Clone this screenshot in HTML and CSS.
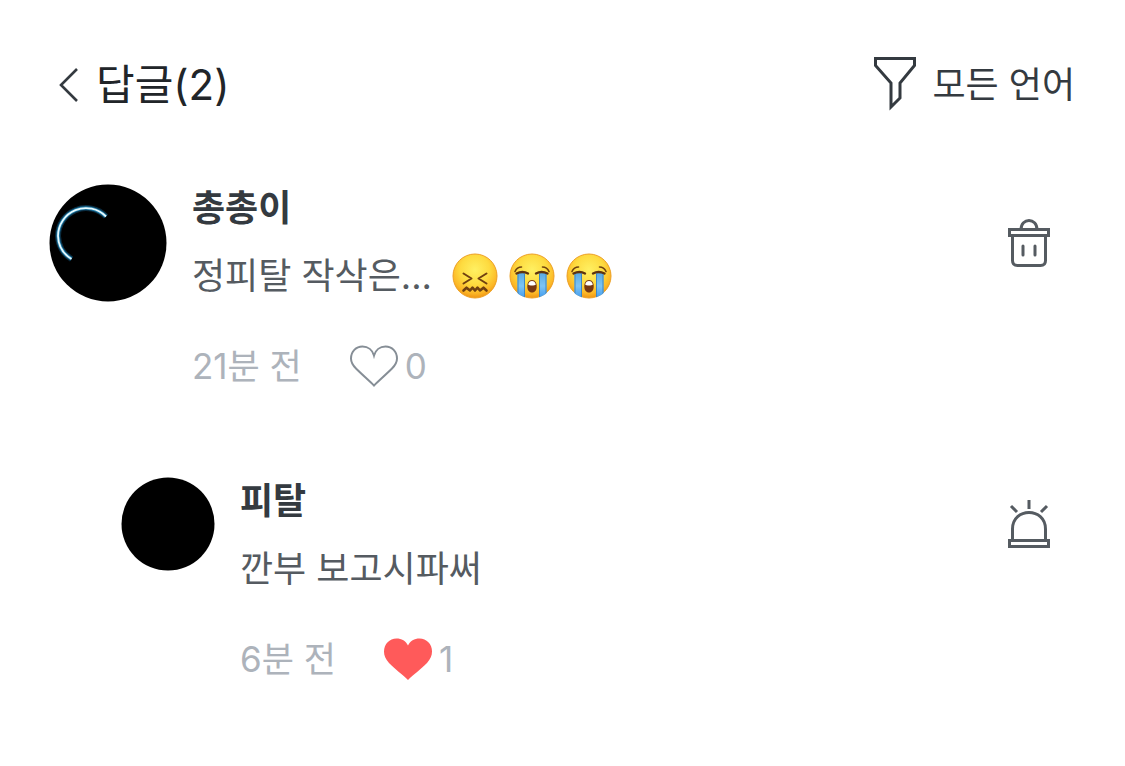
FILE: index.html
```
<!DOCTYPE html>
<html lang="ko">
<head>
    <meta charset="UTF-8">
    <meta name="viewport" content="width=device-width, initial-scale=1.0">
    <title>답글</title>
    <link rel="stylesheet" href="styles.css">
</head>
<body>

    <!-- Shared emoji drawings -->
    <svg class="defs" width="0" height="0" aria-hidden="true">
        <defs>
            <radialGradient id="face" cx="50%" cy="36%" r="66%">
                <stop offset="0" stop-color="#fff062"/>
                <stop offset="0.5" stop-color="#fedb40"/>
                <stop offset="0.8" stop-color="#fcb827"/>
                <stop offset="1" stop-color="#ee8f10"/>
            </radialGradient>
            <linearGradient id="tear" x1="0" y1="0" x2="0" y2="1">
                <stop offset="0" stop-color="#5aaae2"/>
                <stop offset="0.5" stop-color="#7cc4f5"/>
                <stop offset="1" stop-color="#3e98ec"/>
            </linearGradient>
            <clipPath id="faceClip"><circle cx="23" cy="23" r="22.5"/></clipPath>
            <symbol id="crying" viewBox="0 0 46 46">
                <circle cx="23" cy="23" r="22" fill="url(#face)" stroke="#eda024" stroke-width="1"/>
                <g clip-path="url(#faceClip)">
                    <path d="M8.5 20h7.500v26H8.500zM30 20h7.500v26H30z" fill="url(#tear)"/>
                    <path d="M9 21v25M15.500 21v25M30.500 21v25M37 21v25" stroke="#3d86c4" stroke-width="1"/>
                </g>
                <path d="M6 18.500q2-4.500 6.500-4.500M40 18.500q-2-4.500-6.500-4.500" fill="none" stroke="#70420f" stroke-width="1.600" stroke-linecap="round"/>
                <path d="M7.500 20.500q6-3 11.500 0M27 20.500q5.500-3 11.500 0" fill="none" stroke="#5e3410" stroke-width="2.400" stroke-linecap="round"/>
                <path d="M23 27c3.500 0 4.700 3 4.700 6.500S26 39.500 23 39.500s-4.700-2.500-4.700-6S19.500 27 23 27z" fill="#773712"/>
                <path d="M19.200 31.500c.5-2.500 2-3.500 3.800-3.500s3.300 1 3.800 3.500c-1 1.300-6.600 1.300-7.600 0z" fill="#fff"/>
            </symbol>
        </defs>
    </svg>

    <header class="header">
        <button class="back" type="button" aria-label="뒤로">
            <svg width="20" height="34" viewBox="0 0 20 34"><path d="M18 1 2 17l16 16" fill="none" stroke="currentColor" stroke-width="2.600"/></svg>
        </button>
        <h1 class="title">답글(2)</h1>
        <button class="filter" type="button">
            <svg width="44" height="56" viewBox="0 0 44 56"><path d="M1.500 1.500h39v7L26 26v15l-9 9V26L1.500 8.500z" fill="none" stroke="currentColor" stroke-width="3"/></svg>
            모든 언어
        </button>
    </header>

    <main class="comments">
        <article class="comment">
            <svg class="avatar" viewBox="0 0 118 118" aria-hidden="true">
                <circle cx="59" cy="59" r="58.500" fill="#000"/>
                <g fill="none">
                    <path d="M57 32.500A28 28 0 0 0 9 52A28 28 0 0 0 22.500 75" stroke="#0a2c40" stroke-width="6"/>
                    <path d="M57 32.500A28 28 0 0 0 9 52A28 28 0 0 0 22.500 75" stroke="#1e7ba8" stroke-width="3.500"/>
                    <path d="M57 32.500A28 28 0 0 0 9 52A28 28 0 0 0 22.500 75" stroke="#e6faff" stroke-width="1.800"/>
                </g>
            </svg>
            <div class="body">
                <h2 class="name">총총이</h2>
                <p class="text">정피탈 작삭은...
                    <span class="emojis">
                        <svg class="emoji" viewBox="0 0 46 46" role="img" aria-label="😖">
                            <circle cx="23" cy="23" r="22" fill="url(#face)" stroke="#eda024" stroke-width="1"/>
                            <g fill="none" stroke="#704010" stroke-width="2" stroke-linecap="round" stroke-linejoin="round">
                                <path d="M11.500 20.500l8 5-8 5M34.500 20.500l-8 5 8 5"/>
                                <path d="M11.500 37.500l3-2.800 3.500 2.800 2.500-2.800 2.500 2.800 2.500-2.800 2.500 2.800 3.500-2.800 3 2.800" stroke-width="2.600"/>
                            </g>
                        </svg>
                        <svg class="emoji" role="img" aria-label="😭"><use href="#crying"/></svg>
                        <svg class="emoji" role="img" aria-label="😭"><use href="#crying"/></svg>
                    </span>
                </p>
                <div class="meta">
                    <time>21분 전</time>
                    <button class="like" type="button" aria-label="좋아요 0">
                        <svg width="50" height="42" viewBox="0 0 50 42"><path d="M25 40.500C20 35.500 13 29.500 7 23.500 3.500 20 2 17 2 13.500 2 6.500 7 1.500 13.500 1.500 19 1.500 23.500 5 25 10.500 26.500 5 31 1.500 36.500 1.500 43 1.500 48 6.500 48 13.500c0 3.500-1.500 6.500-5 10C37 29.500 30 35.500 25 40.500z" fill="none" stroke="#868e96" stroke-width="2"/></svg>
                        0
                    </button>
                </div>
            </div>
            <button class="action" type="button" aria-label="삭제">
                <svg width="44" height="50" viewBox="0 0 44 50" fill="none" stroke="currentColor" stroke-width="3">
                    <path d="M2.500 11.500h39v6h-39zM5.500 17.500v25q0 5 5 5h23q5 0 5-5v-25M14 11.500c0-12 16-12 16 0"/>
                    <path d="M16 28v9M28 28v9" stroke-linecap="round"/>
                </svg>
            </button>
        </article>

        <article class="comment reply">
            <svg class="avatar" viewBox="0 0 94 94" aria-hidden="true"><circle cx="47" cy="47" r="46.500" fill="#000"/></svg>
            <div class="body">
                <h2 class="name">피탈</h2>
                <p class="text">깐부 보고시파써</p>
                <div class="meta">
                    <time>6분 전</time>
                    <button class="like" type="button" aria-label="좋아요 1" aria-pressed="true">
                        <svg width="50" height="42" viewBox="0 0 50 42"><path d="M25 42C20 37 12 31 6 25 2.500 21 1 17.500 1 13.500 1 6 6.500 .5 13.500 .5 18.500 .5 23 3 25 7.500 27 3 31.500 .5 36.500 .5 43.500 .5 49 6 49 13.500c0 4-1.500 7.500-5 11.500C38 31 30 37 25 42z" fill="#ff5a5a"/></svg>
                        1
                    </button>
                </div>
            </div>
            <button class="action" type="button" aria-label="신고">
                <svg width="44" height="50" viewBox="0 0 44 50" fill="none" stroke="currentColor" stroke-width="3">
                    <path d="M2.500 41.500h39v6h-39zM5.500 41.500V30c0-22 33-22 33 0v11.500M22 1v9M4 7l6 6M40 7l-6 6"/>
                </svg>
            </button>
        </article>
    </main>

</body>
</html>
```
FILE: styles.css
```
/* General Styles */
* {
    box-sizing: border-box;
}

body {
    font-family: Inter, "Noto Sans CJK KR", sans-serif;
    font-size: 36px;
    line-height: 48px;
    background-color: #fff;
    color: #343a40;
    margin: 0;
    padding: 56px 50px 56px 49px;
}

h1, h2, p {
    margin: 0;
}

button {
    font: inherit;
    color: inherit;
    background: none;
    border: none;
    padding: 0;
    cursor: pointer;
}

svg {
    display: block;
    flex-shrink: 0;
}

.defs {
    position: absolute;
}

/* Header */
.header {
    display: flex;
    align-items: center;
    height: 58px;
    margin-bottom: 70px;
}

.back {
    padding: 0 17px 0 10px;
}

.title {
    font-size: 42px;
    font-weight: 400;
    color: #212529;
}

.filter {
    display: flex;
    align-items: center;
    gap: 14px;
    margin-left: auto;
}

/* Comments */
.comments {
    display: flex;
    flex-direction: column;
    gap: 87px;
}

.comment {
    display: flex;
    align-items: flex-start;
    gap: 25px;
    padding-right: 24px;
}

.avatar {
    width: 118px;
    height: 118px;
}

.reply {
    padding-left: 72px;
}

.reply .avatar {
    width: 94px;
    height: 94px;
}

.body {
    flex: 1;
}

.name {
    font-size: 36px;
    font-weight: 700;
}

.text {
    display: flex;
    align-items: center;
    gap: 20px;
    margin: 20px 0 42px;
    color: #555b61;
}

.emojis {
    display: flex;
    gap: 11px;
}

.emoji {
    width: 46px;
    height: 46px;
}

.meta {
    display: flex;
    align-items: center;
    gap: 47px;
    font-size: 35px;
    color: #adb3bb;
}

.like {
    display: flex;
    align-items: center;
    gap: 6px;
}

.action {
    display: flex;
    align-items: center;
    height: 118px;
    color: #555b61;
}

.reply .action {
    height: 94px;
}
```
